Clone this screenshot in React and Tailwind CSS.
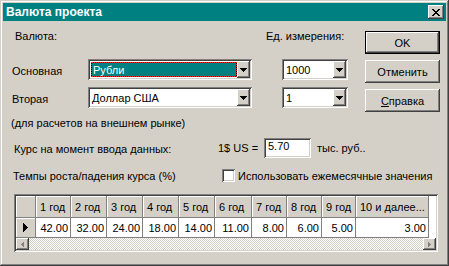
import React from "react";

const raised =
  "bg-[#d4d0c8] shadow-[inset_-1px_-1px_#404040,inset_1px_1px_#ffffff,inset_-2px_-2px_#808080,inset_2px_2px_#d4d0c8]";
const sunken =
  "shadow-[inset_1px_1px_#808080,inset_-1px_-1px_#ffffff,inset_2px_2px_#404040,inset_-2px_-2px_#d4d0c8]";

function DownArrow() {
  return (
    <svg width="7" height="4" viewBox="0 0 7 4" shapeRendering="crispEdges">
      <polygon points="0,0 7,0 3.5,4" fill="#000" />
    </svg>
  );
}

function Combo({ w, text, selected }) {
  return (
    <div className={`${w} h-[21px] bg-white ${sunken} p-[2px] flex`}>
      <div className="flex-1 flex items-center min-w-0">
        {selected ? (
          <div className="h-full w-full pl-[1px] py-[1px]">
            <div className="h-full w-full bg-black">
              <div className="h-full w-full bg-[#008080] bg-clip-padding border border-dotted border-[#ff2020] flex items-center pl-[1px] text-white">
                {text}
              </div>
            </div>
          </div>
        ) : (
          <span className="pl-[2px]">{text}</span>
        )}
      </div>
      <div className={`w-[13px] h-full ${raised} flex items-center justify-center`}>
        <DownArrow />
      </div>
    </div>
  );
}

function Btn({ children, def }) {
  if (def) {
    return (
      <div className="w-[75px] h-[23px] border border-black">
        <div className={`w-full h-full ${raised} flex items-center justify-center`}>
          {children}
        </div>
      </div>
    );
  }
  return (
    <div className={`w-[75px] h-[23px] ${raised} flex items-center justify-center`}>
      {children}
    </div>
  );
}

const cols = [
  ["1 год", "42.00", "w-[35px]"],
  ["2 год", "32.00", "w-[36px]"],
  ["3 год", "24.00", "w-[36px]"],
  ["4 год", "18.00", "w-[36px]"],
  ["5 год", "14.00", "w-[36px]"],
  ["6 год", "11.00", "w-[37px]"],
  ["7 год", "8.00", "w-[35px]"],
  ["8 год", "6.00", "w-[35px]"],
  ["9 год", "5.00", "w-[34px]"],
  ["10 и далее...", "3.00", "w-[73px]"],
];

export default function App() {
  return (
    <div className="w-[449px] h-[266px] bg-[#d4d0c8] p-[3px] flex flex-col font-['Liberation_Sans',Arial,sans-serif] text-[11px] leading-[14px] text-black shadow-[inset_-1px_-1px_#404040,inset_1px_1px_#d4d0c8,inset_-2px_-2px_#808080,inset_2px_2px_#ffffff]">
      {/* Title bar */}
      <div className="h-[18px] shrink-0 bg-[#008080] flex items-center justify-between pl-[3px] pr-[2px]">
        <span className="text-white font-bold text-[12px] leading-[18px]">Валюта проекта</span>
        <div className={`w-[16px] h-[14px] ${raised} flex items-center justify-center`}>
          <svg width="8" height="7" viewBox="0 0 8 7" shapeRendering="crispEdges">
            <path
              d="M0 0h2v1h-2z M6 0h2v1h-2z M1 1h2v1h-2z M5 1h2v1h-2z M2 2h4v1h-4z M3 3h2v1h-2z M2 4h4v1h-4z M1 5h2v1h-2z M5 5h2v1h-2z M0 6h2v1h-2z M6 6h2v1h-2z"
              fill="#000"
            />
          </svg>
        </div>
      </div>

      {/* Top section */}
      <div className="flex">
        <div className="w-[362px] flex flex-col">
          <div className="mt-[8px] h-[14px] flex">
            <span className="w-[263px] pl-[12px]">Валюта:</span>
            <span>Ед. измерения:</span>
          </div>
          <div className="mt-[16px] h-[21px] flex items-start">
            <span className="w-[85px] pl-[9px] mt-[5px]">Основная</span>
            <Combo w="w-[164px]" text="Рубли" selected />
            <div className="ml-[30px]">
              <Combo w="w-[66px]" text="1000" />
            </div>
          </div>
          <div className="mt-[7px] h-[21px] flex items-start">
            <span className="w-[85px] pl-[9px] mt-[5px]">Вторая</span>
            <Combo w="w-[164px]" text="Доллар США" />
            <div className="ml-[30px]">
              <Combo w="w-[66px]" text="1" />
            </div>
          </div>
          <div className="mt-[8px] h-[14px] pl-[8px]">(для расчетов на внешнем рынке)</div>
        </div>
        <div className="flex flex-col gap-[6px] mt-[10px]">
          <Btn def>OK</Btn>
          <Btn>Отменить</Btn>
          <Btn>
            <span>
              <span className="underline">С</span>правка
            </span>
          </Btn>
        </div>
      </div>

      {/* Rate row */}
      <div className="mt-[8px] h-[20px] flex items-start">
        <span className="w-[215px] pl-[11px] mt-[4px]">Курс на момент ввода данных:</span>
        <span className="w-[46px] mt-[3px]">1$ US =</span>
        <div className={`w-[47px] h-[20px] bg-white ${sunken} pl-[4px] pt-[2px] leading-[12px]`}>5.70</div>
        <span className="ml-[6px] mt-[3px]">тыс. руб..</span>
      </div>

      {/* Growth row */}
      <div className="mt-[11px] h-[13px] flex items-center">
        <span className="w-[219px] pl-[10px]">Темпы роста/падения курса (%)</span>
        <div className={`w-[13px] h-[13px] bg-white ${sunken}`} />
        <span className="ml-[3px]">Использовать ежемесячные значения</span>
      </div>

      {/* Grid */}
      <div className={`mt-[12px] ml-[11px] w-[424px] h-[58px] ${sunken} p-[2px] bg-white flex flex-col`}>
        <div className="h-[22px] flex">
          <div className="w-[20px] h-full bg-[#d4d0c8] border-r border-b border-[#808080] shadow-[inset_1px_1px_#ffffff]" />
          {cols.map(([h, , w]) => (
            <div
              key={h}
              className={`${w} h-full bg-[#d4d0c8] border-r border-b border-[#808080] shadow-[inset_1px_1px_#ffffff] pl-[4px] flex items-center whitespace-nowrap overflow-hidden`}
            >
              {h}
            </div>
          ))}
          <div className="flex-1 h-full bg-white" />
        </div>
        <div className="h-[20px] flex">
          <div className="w-[20px] h-full bg-[#d4d0c8] border-r border-b border-[#808080] shadow-[inset_1px_1px_#ffffff] flex items-center justify-center">
            <svg width="5" height="9" viewBox="0 0 5 9" shapeRendering="crispEdges">
              <polygon points="0,0 5,4.5 0,9" fill="#000" />
            </svg>
          </div>
          {cols.map(([h, v, w]) => (
            <div
              key={h}
              className={`${w} h-full bg-white border-r border-b border-[#808080] pr-[2px] flex items-center justify-end`}
            >
              {v}
            </div>
          ))}
          <div className="flex-1 h-full bg-white" />
        </div>
        <div className="h-[12px] flex bg-[conic-gradient(#ffffff_25%,#d4d0c8_0_50%,#ffffff_0_75%,#d4d0c8_0)] bg-[length:2px_2px]">
          <div className={`w-[13px] h-full ${raised} flex items-center justify-center`}>
            <svg width="3" height="5" viewBox="0 0 3 5" shapeRendering="crispEdges">
              <polygon points="3,0 3,5 0,2.5" fill="#808080" />
            </svg>
          </div>
          <div className="flex-1" />
          <div className={`w-[13px] h-full ${raised} flex items-center justify-center`}>
            <svg width="3" height="5" viewBox="0 0 3 5" shapeRendering="crispEdges">
              <polygon points="0,0 0,5 3,2.5" fill="#808080" />
            </svg>
          </div>
        </div>
      </div>
    </div>
  );
}
